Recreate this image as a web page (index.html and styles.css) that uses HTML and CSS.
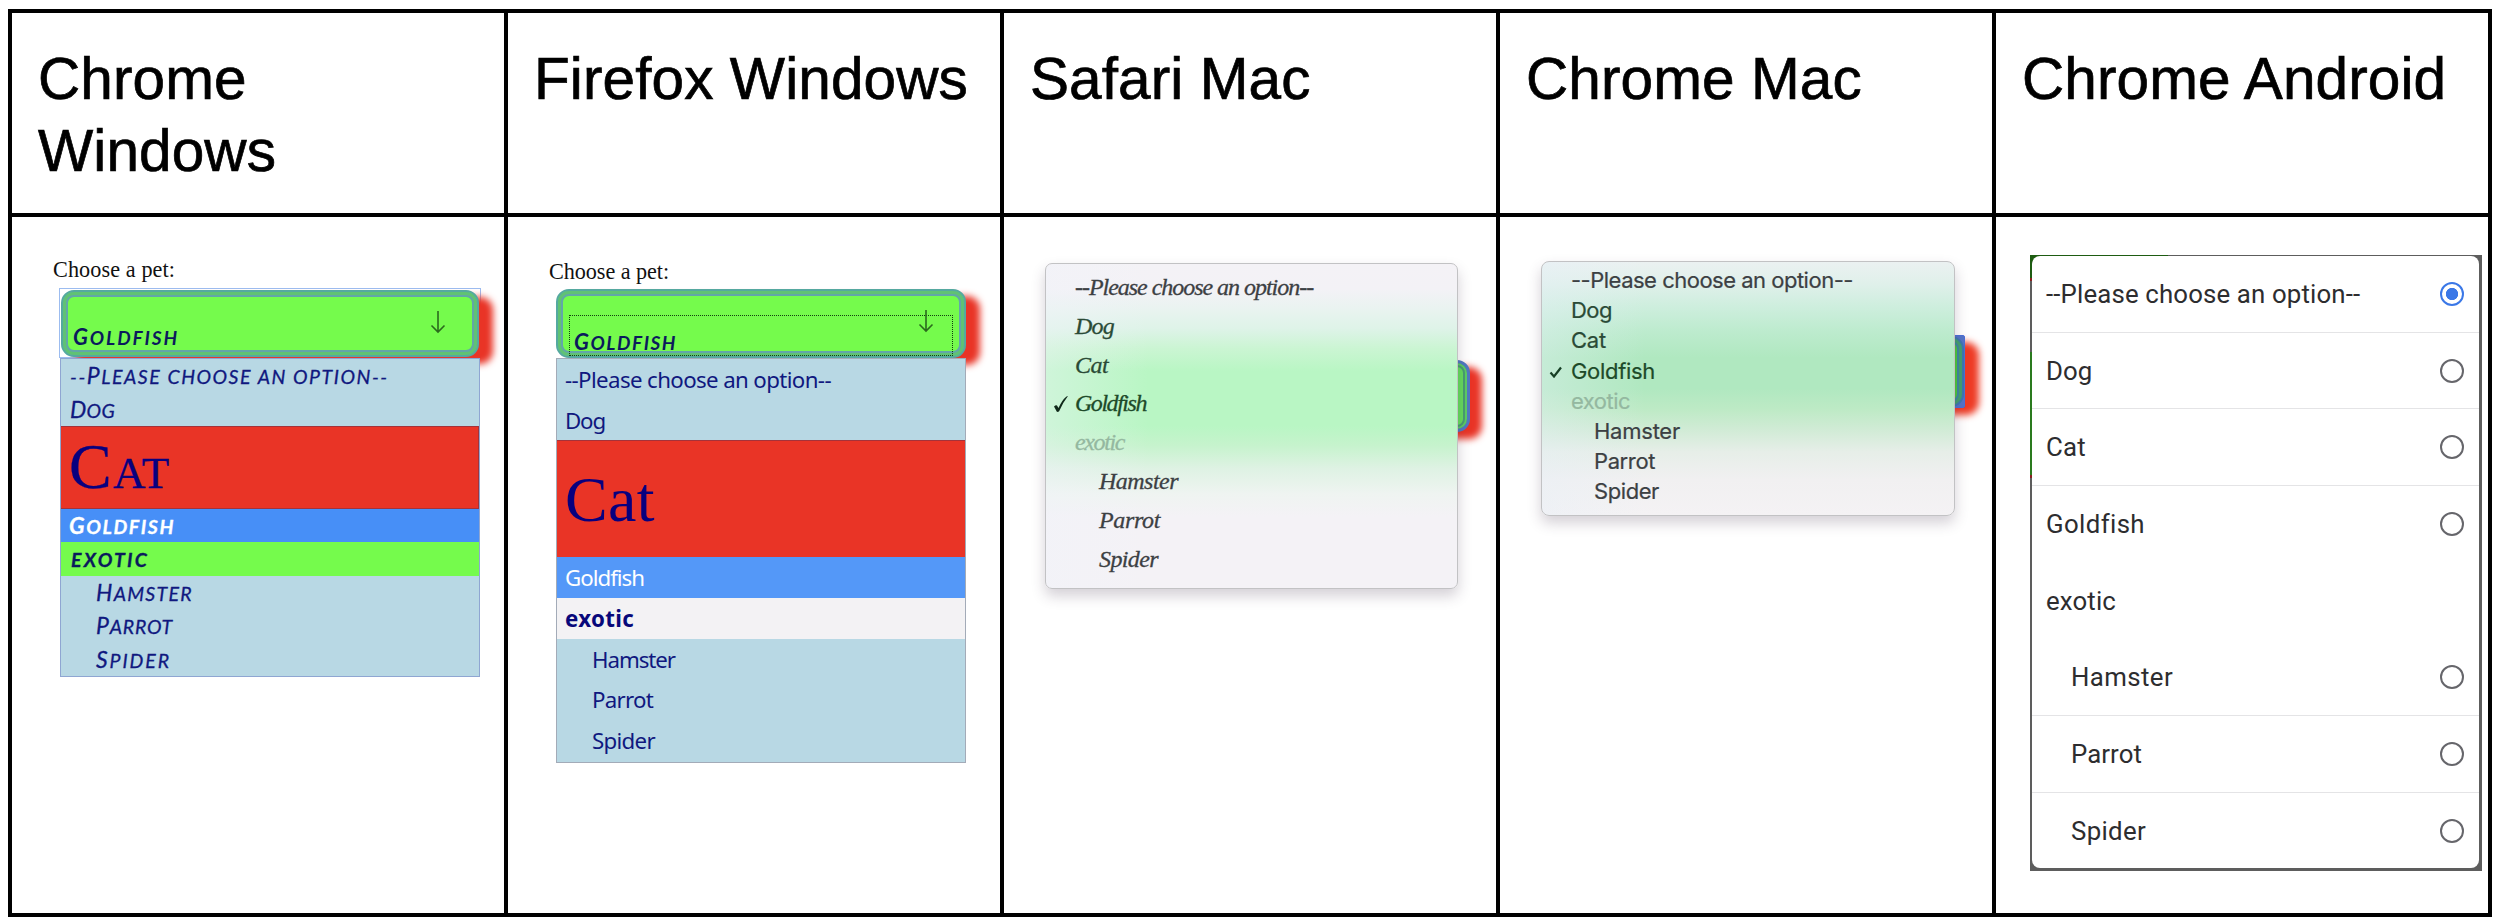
FILE: index.html
```html
<!DOCTYPE html>
<html lang="en">
<head>
<meta charset="utf-8">
<title>Select menus by browser</title>
<link rel="stylesheet" href="styles.css">
</head>
<body>
<main class="table">
  <h2 class="head">Chrome Windows</h2>
  <h2 class="head">Firefox Windows</h2>
  <h2 class="head">Safari Mac</h2>
  <h2 class="head">Chrome Mac</h2>
  <h2 class="head">Chrome Android</h2>

  <section class="cell cw">
    <p class="label">Choose a pet:</p>
    <div class="focus"><div class="select"><b class="value"><span>Goldfish</span></b>
      <svg class="arrow" viewBox="0 0 16 24"><path d="M8 1v21M1.500 15.500l6.500 6.500 6.500-6.500"/></svg></div></div>
    <ul class="menu">
      <li class="please"><span>--<b class="cap">P</b>lease choose an option--</span></li>
      <li class="dog"><span>Dog</span></li>
      <li class="cat"><span>Cat</span></li>
      <li class="gold"><span>Goldfish</span></li>
      <li class="exotic"><span>exotic</span></li>
      <li class="sub ham"><span>Hamster</span></li>
      <li class="sub par"><span>Parrot</span></li>
      <li class="sub spi"><span>Spider</span></li>
    </ul>
  </section>

  <section class="cell fw">
    <p class="label">Choose a pet:</p>
    <div class="select"><div class="dots"></div><b class="value"><span>Goldfish</span></b>
      <svg class="arrow" viewBox="0 0 16 24"><path d="M8 1v21M1.500 15.500l6.500 6.500 6.500-6.500"/></svg></div>
    <ul class="menu">
      <li class="please"><span>--Please choose an option--</span></li>
      <li class="dog"><span>Dog</span></li>
      <li class="cat"><span>Cat</span></li>
      <li class="gold"><span>Goldfish</span></li>
      <li class="exotic"><span>exotic</span></li>
      <li class="sub ham"><span>Hamster</span></li>
      <li class="sub par"><span>Parrot</span></li>
      <li class="sub spi"><span>Spider</span></li>
    </ul>
  </section>

  <section class="cell sm">
    <div class="stack">
      <div class="peek"></div>
      <ul class="menu">
        <li class="please"><span>--Please choose an option--</span></li>
        <li class="dog"><span>Dog</span></li>
        <li class="cat"><span>Cat</span></li>
        <li class="gold"><svg class="check" viewBox="0 0 16 18"><path d="M1 11.500Q3 9.500 4 10.500L5.500 13Q9 5 13.500 1.500L15 1Q9.500 8 6 16.500L4 17Z"/></svg><span>Goldfish</span></li>
        <li class="exotic"><span>exotic</span></li>
        <li class="sub ham"><span>Hamster</span></li>
        <li class="sub par"><span>Parrot</span></li>
        <li class="sub spi"><span>Spider</span></li>
      </ul>
    </div>
  </section>

  <section class="cell cm">
    <div class="stack">
      <div class="peek-shadow"></div>
      <div class="peek-frame"><div class="peek"></div></div>
      <ul class="menu">
        <li class="please"><span>--Please choose an option--</span></li>
        <li class="dog"><span>Dog</span></li>
        <li class="cat"><span>Cat</span></li>
        <li class="gold"><svg class="check" viewBox="0 0 14 12"><path d="M1.500 6.500L5 10.500 12 1.500"/></svg><span>Goldfish</span></li>
        <li class="exotic"><span>exotic</span></li>
        <li class="sub ham"><span>Hamster</span></li>
        <li class="sub par"><span>Parrot</span></li>
        <li class="sub spi"><span>Spider</span></li>
      </ul>
    </div>
  </section>

  <section class="cell ca">
    <div class="backdrop">
      <ul class="menu">
        <li class="please"><span>--Please choose an option--</span><i class="radio on"></i></li>
        <li class="dog"><span>Dog</span><i class="radio"></i></li>
        <li class="cat"><span>Cat</span><i class="radio"></i></li>
        <li class="gold"><span>Goldfish</span><i class="radio"></i></li>
        <li class="exotic"><span>exotic</span></li>
        <li class="sub ham"><span>Hamster</span><i class="radio"></i></li>
        <li class="sub par"><span>Parrot</span><i class="radio"></i></li>
        <li class="sub spi"><span>Spider</span><i class="radio"></i></li>
      </ul>
    </div>
  </section>
</main>
</body>
</html>
```
FILE: styles.css
```css
* { box-sizing: border-box; }
body { margin: 0; padding: 9px 8px 0; background: #fff; }
ul, p, h2 { margin: 0; padding: 0; list-style: none; }

.table { display: grid; grid-template-columns: repeat(5, 492px); grid-template-rows: 200px 696px; gap: 4px; padding: 4px; width: 2484px; height: 908px; background: #000; }
.head { background: #fff; padding: 30px 20px 0 26px; font: 400 58.500px/72px "Liberation Sans", Arial, sans-serif; color: #000; letter-spacing: .1px; -webkit-text-stroke: .7px #000; }
.cell { background: #fff; display: flex; flex-direction: column; align-items: flex-start; }
li { display: flex; position: relative; white-space: nowrap; }
span { display: inline-block; white-space: nowrap; }
.label { font: 22.200px/26px "Liberation Serif", serif; color: #111; }

/* Styled select shared by the Windows browsers */
.select { position: relative; background: #75fb4c; border: 2px solid #55a9a0; border-radius: 13px; box-shadow: inset 0 0 0 3px #60c274, inset 0 0 0 5px #62a6a8, 14px 7px 7px #e93426; }
.value { display: block; font: italic 700 19px/26px Lato, sans-serif; color: #0b1a5c; text-transform: uppercase; }
.value span::first-letter { font-size: 22px; }
.arrow { position: absolute; width: 16px; height: 24px; fill: none; stroke: #2b6a1d; stroke-width: 1.600; }
.fw .menu, .cw .menu { position: relative; background: #b8d8e4; color: #10187f; }

/* Chrome Windows */
.cw .label { padding: 40px 0 0 41px; letter-spacing: .1px; }
.focus { margin: 5px 0 0 47px; width: 422px; height: 70px; border: 1px solid #9cbcf0; padding: 1px 1px 0; }
.cw .select { height: 67px; padding: 32px 0 0 10px; }
.cw .value { letter-spacing: 1.910px; }
.cw .arrow { right: 31px; top: 18px; }
.cw .menu { margin-left: 48px; width: 420px; height: 319px; border: 1px solid #8fa6d2; font: italic 400 19.500px/33.500px Lato, sans-serif; text-transform: uppercase; -webkit-text-stroke: .3px; }
.cw li { height: 33.500px; padding-left: 9px; }
.cap { font-size: 23px; font-weight: 400; }
.cw li:not(.please) span::first-letter { font-size: 23px; }
.cw .menu .cat { height: 82.500px; padding-left: 8px; background: #e93426; font: 400 64px/80px "Liberation Serif", serif; font-variant: small-caps; text-transform: none; color: #08007f; border: 1px solid #a5323a; border-width: 1px 1px 1px 0; }
.cw .menu .cat span::first-letter { font-size: 64px; }
.cw .menu .gold { background: #478ff7; color: #fff; font-weight: 700; padding-left: 8px; }
.cw .menu .exotic { background: #75fb4c; font-weight: 700; padding: 1px 0 0 10px; color: #0b1a5c; }
.cw .menu .exotic span::first-letter { font-size: 19.500px; }
.cw .menu .sub { padding-left: 35px; }
.cw .please { letter-spacing: 1.540px; }
.cw .dog { letter-spacing: .3px; }
.cw .cat { letter-spacing: 1.300px; }
.cw .gold { letter-spacing: 1.570px; }
.cw .exotic { letter-spacing: 2.200px; }
.cw .ham { letter-spacing: 1.300px; }
.cw .par { letter-spacing: .780px; }
.cw .spi { letter-spacing: 1.910px; }

/* Firefox Windows */
.fw .label { padding: 42px 0 0 41px; letter-spacing: -.060px; }
.fw .select { margin: 4px 0 0 48px; width: 410px; height: 69px; padding: 38px 0 0 16px; }
.fw .value { letter-spacing: 1.540px; }
.fw .arrow { right: 30px; top: 18px; }
.dots { position: absolute; left: 11px; top: 24px; width: 384px; height: 41px; border: 1px dotted #123f10; }
.fw .menu { margin-left: 48px; width: 410px; height: 405px; border: 1px solid #a3abb8; font: 400 22.300px/42.700px "Noto Sans", sans-serif; }
.fw li { height: 40.700px; padding-left: 8px; }
.fw .menu .cat { height: 117px; background: #e93426; font: 400 64px/117px "Liberation Serif", serif; color: #08007f; border-top: 1px solid #a5323a; }
.fw .menu .gold { background: #5498f8; color: #fff; }
.fw .menu .exotic { background: #f3f2f4; font-weight: 700; color: #08087a; }
.fw .menu .sub { padding-left: 35px; }
.fw .please { letter-spacing: -.630px; }
.fw .dog { letter-spacing: -1.160px; }
.fw .cat { letter-spacing: .380px; }
.fw .gold { letter-spacing: -1.010px; }
.fw .exotic { letter-spacing: .320px; }
.fw .ham { letter-spacing: -1.060px; }
.fw .par { letter-spacing: -.750px; }
.fw .spi { letter-spacing: -.700px; }

/* Mac popups */
.stack { position: relative; }
.sm .menu, .cm .menu { position: relative; border: 1px solid #c2c2c4; color: #3c4043; }
.sm .stack { margin: 46px 0 0 41px; }
.sm .menu { width: 413px; height: 326px; padding-top: 4px; border-radius: 7px; font: italic 400 24px/38.800px "Liberation Serif", serif; -webkit-text-stroke: .3px; box-shadow: 0 7px 14px rgba(60,40,70,.22); background: linear-gradient(90deg, rgba(240,243,250,.4), rgba(243,243,250,0) 25%), linear-gradient(#f4f2f6 0, #f3f2f6 8%, #e9f3f0 14%, #def3e8 20%, #cbf5d3 26%, #b9f6c4 33%, #b9f6c4 50%, #c6f3cd 56%, #def2e3 63%, #eff4f1 71%, #f4f2f6 78%); }
.sm li { height: 38.800px; padding-left: 29px; }
.sm .sub, .cm .sub { padding-left: 53px; }
.sm .peek { position: absolute; right: -12px; top: 97px; width: 60px; height: 72px; background: #65dc5c; border: 3px solid #5078c0; border-radius: 13px; box-shadow: inset 0 0 0 2px #5ccd62, inset 0 0 0 4px #489c72, 12px 7px 7px #e93426; }
.check { position: absolute; }
.sm .check { left: 7px; top: 11px; width: 16px; height: 18px; fill: #10291a; }
.sm .gold, .cm .gold { color: #1d4a29; }
.sm .cat, .cm .cat, .sm .dog, .cm .dog { color: #2a4a36; }
.sm .exotic, .cm .exotic { color: #94b8a0; }
.sm .please { letter-spacing: -1.030px; }
.sm .dog { letter-spacing: -.780px; }
.sm .cat { letter-spacing: -.560px; }
.sm .gold { letter-spacing: -1.460px; }
.sm .exotic { letter-spacing: -1.380px; }
.sm .ham { letter-spacing: -.520px; }
.sm .par { letter-spacing: -.350px; }
.sm .spi { letter-spacing: -.610px; }

.cm .stack { margin: 44px 0 0 41px; }
.cm .menu { width: 414px; height: 255px; padding-top: 3px; border-radius: 8px; font: 400 22px/30.200px Inter, sans-serif; -webkit-text-stroke: .2px; box-shadow: 0 7px 14px rgba(60,40,70,.22); background: linear-gradient(90deg, rgba(230,240,248,.4), rgba(230,240,248,0) 25%), linear-gradient(#ebf1f1 0, #dff0ea 9%, #cdeedd 18%, #bcebcd 28%, #b0e8c0 38%, #b0e8c0 50%, #bdeac5 58%, #d0ebd5 66%, #e6eee8 75%, #f1f0f1 86%, #f4f2f4); }
.cm li { height: 30.200px; padding-left: 29px; }
.cm .menu .sub { padding-left: 52px; }
.peek-frame, .peek-shadow { position: absolute; right: -10px; top: 74px; width: 60px; height: 73px; }
.peek-frame { background: #5474c8; border: 1px solid #4a70d8; border-radius: 2px; }
.peek-shadow { border-radius: 13px; box-shadow: 14px 7px 7px #ee3b25; }
.cm .peek { height: 71px; background: #4cc83c; border: 2px solid #3d78b0; border-radius: 13px; box-shadow: inset 0 0 0 3px #43a070, inset 0 0 0 5px #3d88a0; }
.cm .check { left: 7px; top: 10px; width: 14px; height: 12px; fill: none; stroke: #173f25; stroke-width: 2.200; }
.cm .please { letter-spacing: -.500px; }
.cm .dog { letter-spacing: -.520px; }
.cm .cat { letter-spacing: -.210px; }
.cm .gold { letter-spacing: -.310px; }
.cm .exotic { letter-spacing: -.520px; }
.cm .ham { letter-spacing: -.240px; }
.cm .par { letter-spacing: -.390px; }
.cm .spi { letter-spacing: -.420px; }

/* Android dialog */
.backdrop { margin: 38px 0 0 34px; width: 452px; height: 616px; padding: 1px 3px 3px 2px; background: linear-gradient(#1e5c12, #1e5c12) 0 0 / 138px 7px no-repeat, linear-gradient(#1e5c12 0 23px, #8a2020 23px 26px, #5d5d5d 26px 97px, #2a7a1e 97px 220px, #8a2020 220px 223px, #5d5d5d 223px) 0 0 / 2px 100% no-repeat, #5d5d5d; }
.ca .menu { width: 447px; height: 612px; border-radius: 8px; background: #fff; font: 400 25.800px/76.700px Roboto, sans-serif; color: #2d2d2f; }
.ca li { height: 76.700px; padding: 0 15px 0 14px; justify-content: space-between; border-bottom: 1px solid #e4e4e6; }
.ca .gold, .ca .exotic, .ca .spi { border-bottom-color: transparent; }
.ca .menu .sub { padding-left: 39px; }
.radio { width: 24px; height: 24px; margin-top: 26px; border: 2px solid #66666b; border-radius: 50%; }
.radio.on { border-color: #3b78e7; background: radial-gradient(circle, #3b78e7 5.800px, #fff 6.500px); }
.ca .please { letter-spacing: .150px; }
.ca .cat { letter-spacing: .240px; }
.ca .gold { letter-spacing: .380px; }
.ca .exotic { letter-spacing: .140px; }
.ca .ham { letter-spacing: .400px; }
.ca .par { letter-spacing: .070px; }
.ca .spi { letter-spacing: .330px; }
```
